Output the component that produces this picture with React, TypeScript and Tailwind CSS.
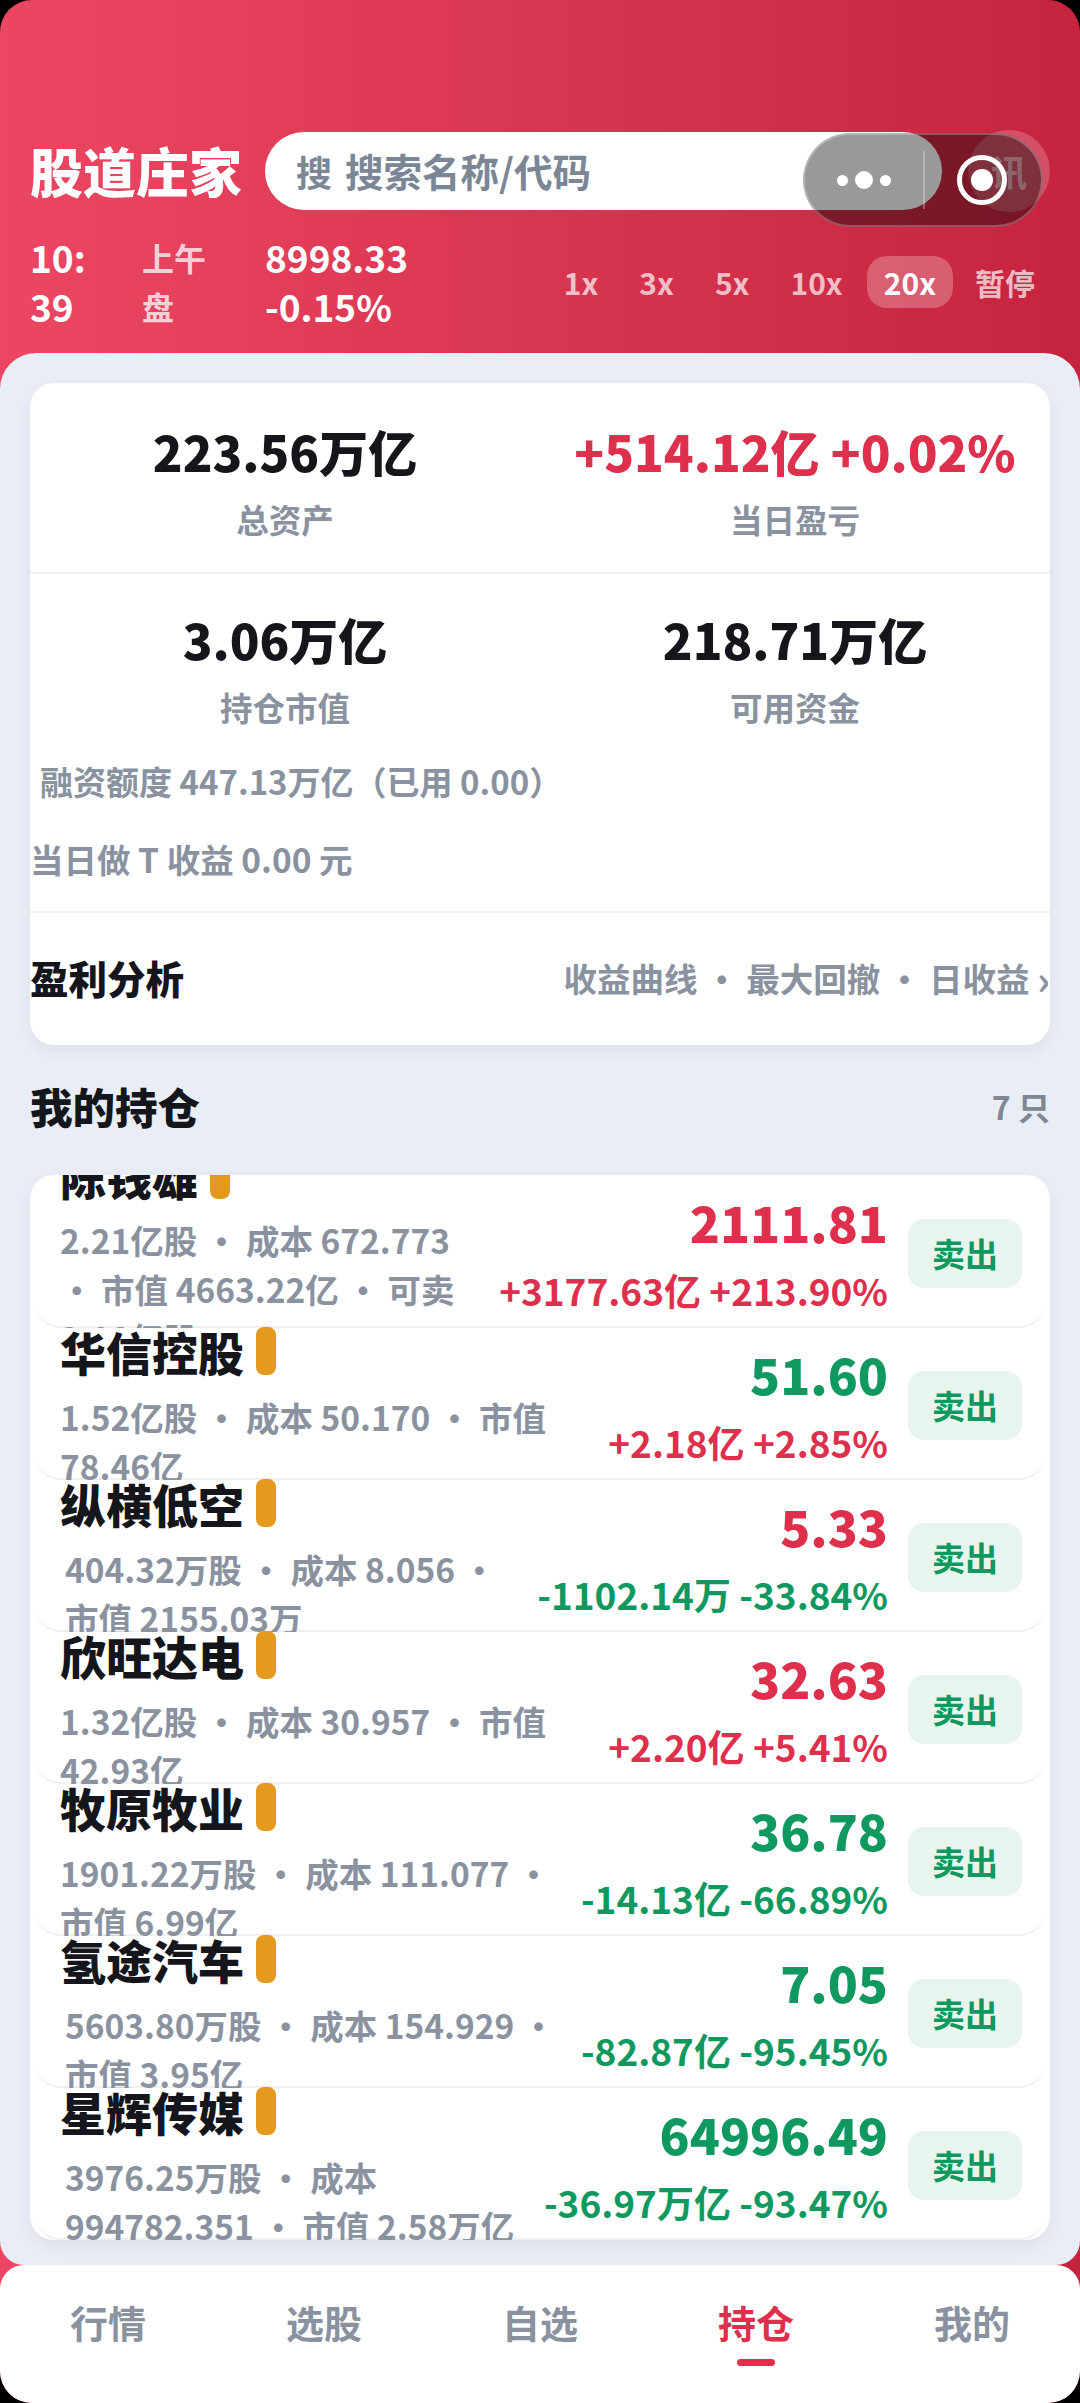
const FONT = "font-['Noto_Sans_CJK_SC','Noto_Sans',sans-serif]";

type Row = {
  name: string;
  lines: string[];
  pad: string;
  price: string;
  pnl: string;
  priceColor: string;
  pnlColor: string;
};

const RED = "text-[#de2f4d]";
const GREEN = "text-[#0f9960]";

const rows: Row[] = [
  { name: "陈钱雄", lines: ["2.21亿股 • 成本 672.773", "• 市值 4663.22亿 • 可卖", "3.08亿股"], pad: "ml-0", price: "2111.81", pnl: "+3177.63亿 +213.90%", priceColor: RED, pnlColor: RED },
  { name: "华信控股", lines: ["1.52亿股 • 成本 50.170 • 市值", "78.46亿"], pad: "ml-0", price: "51.60", pnl: "+2.18亿 +2.85%", priceColor: GREEN, pnlColor: RED },
  { name: "纵横低空", lines: ["404.32万股 • 成本 8.056 •", "市值 2155.03万"], pad: "ml-[5px]", price: "5.33", pnl: "-1102.14万 -33.84%", priceColor: RED, pnlColor: GREEN },
  { name: "欣旺达电", lines: ["1.32亿股 • 成本 30.957 • 市值", "42.93亿"], pad: "ml-0", price: "32.63", pnl: "+2.20亿 +5.41%", priceColor: RED, pnlColor: RED },
  { name: "牧原牧业", lines: ["1901.22万股 • 成本 111.077 •", "市值 6.99亿"], pad: "ml-0", price: "36.78", pnl: "-14.13亿 -66.89%", priceColor: GREEN, pnlColor: GREEN },
  { name: "氢途汽车", lines: ["5603.80万股 • 成本 154.929 •", "市值 3.95亿"], pad: "ml-[5px]", price: "7.05", pnl: "-82.87亿 -95.45%", priceColor: GREEN, pnlColor: GREEN },
  { name: "星辉传媒", lines: ["3976.25万股 • 成本", "994782.351 • 市值 2.58万亿"], pad: "ml-[5px]", price: "64996.49", pnl: "-36.97万亿 -93.47%", priceColor: GREEN, pnlColor: GREEN },
];

function Stat({ value, label, color }: { value: string; label: string; color?: string }) {
  return (
    <div className="flex flex-1 flex-col items-center">
      <div className={`h-[78px] whitespace-nowrap text-[49px] leading-[78px] font-black ${color ?? "text-[#14161c]"}`}>{value}</div>
      <div className="mt-[5px] h-[48px] text-[32.5px] leading-[48px] font-bold text-[#8a92a0]">{label}</div>
    </div>
  );
}

function HoldingRow({ r }: { r: Row }) {
  return (
    <div className="relative z-0 mx-[6px] flex h-[152px] rounded-b-[24px] border-b-2 border-[#eef0f4] bg-white pr-[22px] pl-[24px]">
      <div className="flex min-w-0 flex-1 flex-col justify-center pb-[6px]">
        <div className="flex h-[81px] shrink-0 items-center gap-[12px]">
          <span className="text-[46px] leading-[60px] font-black text-[#14161c]">{r.name}</span>
          <span className="h-[48px] w-[20px] rounded-[8px] bg-[#e39a1e]" />
        </div>
        {r.lines.map((l) => (
          <div key={l} className={`h-[49px] shrink-0 whitespace-pre text-[33.5px] leading-[49px] font-bold text-[#8a92a0] ${r.pad}`}>{l}</div>
        ))}
      </div>
      <div className="flex shrink-0 flex-col items-end pt-[15px]">
        <div className={`h-[62px] text-[49.5px] leading-[62px] font-black ${r.priceColor}`}>{r.price}</div>
        <div className={`mt-[11px] h-[52px] whitespace-nowrap text-[37px] leading-[52px] font-bold ${r.pnlColor}`}>{r.pnl}</div>
      </div>
      <div className="mt-[43px] ml-[20px] flex h-[69px] w-[114px] shrink-0 items-center justify-center rounded-[16px] bg-[#e8f5ee] text-[33px] font-bold text-[#0f9960]">卖出</div>
    </div>
  );
}

export default function App() {
  return (
    <div className="h-[2403px] w-[1080px] bg-black">
      <div className={`${FONT} relative flex h-[2403px] w-[1080px] flex-col overflow-hidden rounded-[32px] bg-gradient-to-r from-[#ec4663] to-[#c6233e]`}>
        <header className="h-[353px] shrink-0 px-[30px] pt-[132px]">
          <div className="flex h-[78px] items-center">
            <div className="w-[210px] shrink-0 text-[53px] font-black whitespace-nowrap text-white">股道庄家</div>
            <div className="ml-[25px] flex h-[78px] flex-1 items-center rounded-full bg-white pl-[31px] text-[36px] font-bold text-[#7c8796]">
              <span>搜</span>
              <span className="ml-[13px] text-[38.5px]">搜索名称/代码</span>
            </div>
            <div className="ml-[26px] flex h-[82px] w-[82px] shrink-0 items-center justify-center rounded-full bg-white/20 text-[36px] font-bold text-white/50">讯</div>
          </div>
          <div className="mt-[22px] flex h-[100px] items-center">
            <div className="w-[112px] text-[37px] leading-[49px] font-bold text-white">10:<br />39</div>
            <div className="w-[123px] text-[32px] leading-[49px] font-bold text-white/75">上午<br />盘</div>
            <div className="text-[37px] leading-[49px] font-bold text-white">8998.33<br />-0.15%</div>
            <div className="ml-auto flex items-center gap-[7px] pl-[2px] text-[30px] font-bold text-white/70">
              {["1x", "3x", "5x", "10x"].map((t) => (
                <span key={t} className="px-[17px]">{t}</span>
              ))}
              <span className="flex h-[52px] items-center rounded-[20px] bg-white/25 px-[17px] text-white">20x</span>
              <span className="px-[15px]">暂停</span>
            </div>
          </div>
        </header>

        <main className="flex h-[1912px] shrink-0 flex-col rounded-t-[36px] rounded-b-[24px] bg-[#e9edf5] px-[30px] pt-[30px]">
          <section className="h-[662px] shrink-0 rounded-[24px] bg-white shadow-[0_6px_16px_rgba(30,40,70,0.06)]">
            <div className="flex h-[191px] items-start border-b-2 border-[#eff1f4] pt-[29px]">
              <Stat value="223.56万亿" label="总资产" />
              <Stat value="+514.12亿 +0.02%" label="当日盈亏" color={RED} />
            </div>
            <div className="flex pt-[26px]">
              <Stat value="3.06万亿" label="持仓市值" />
              <Stat value="218.71万亿" label="可用资金" />
            </div>
            <div className="mt-[26px] pl-[10px] text-[33px] leading-[48px] font-bold whitespace-nowrap text-[#8a92a0]">融资额度 447.13万亿（已用 0.00）</div>
            <div className="mt-[30px] text-[33.5px] leading-[48px] font-bold whitespace-nowrap text-[#8a92a0]">当日做 T 收益 0.00 元</div>
            <div className="mt-[28px] flex h-[132px] items-center justify-between border-t-2 border-[#eff1f4]">
              <span className="text-[38.5px] font-black text-[#14161c]">盈利分析</span>
              <span className="flex items-center text-[33.5px] font-bold whitespace-pre text-[#8a92a0]">收益曲线 • 最大回撤 • 日收益 <span className="text-[40px] leading-none">›</span></span>
            </div>
          </section>

          <div className="mt-[30px] flex h-[62px] shrink-0 items-center justify-between">
            <span className="text-[42.5px] font-black text-[#14161c]">我的持仓</span>
            <span className="text-[32px] font-bold text-[#7f8794]">7 只</span>
          </div>

          <section className="mt-[38px] h-[1065px] shrink-0 overflow-hidden rounded-[24px] bg-white pt-[1px] shadow-[0_6px_16px_rgba(30,40,70,0.06)]">
            {rows.map((r) => (
              <HoldingRow key={r.name} r={r} />
            ))}
          </section>
        </main>

        <nav className="relative z-10 grid h-[138px] shrink-0 grid-cols-5 rounded-t-[24px] bg-white pt-[28px] text-center text-[38px] font-bold text-[#8a92a0]">
          <span>行情</span>
          <span>选股</span>
          <span>自选</span>
          <span className="relative text-[#de2f4d]">
            持仓
            <span className="absolute top-[66px] left-1/2 h-[7px] w-[38px] -translate-x-1/2 rounded-full bg-[#de2f4d]" />
          </span>
          <span>我的</span>
        </nav>

        <div className="absolute top-[133px] left-[803px] flex h-[94px] w-[240px] items-center rounded-full border-2 border-white/25 bg-black/40">
          <div className="flex w-[118px] items-center justify-center gap-[7px]">
            <span className="h-[11px] w-[11px] rounded-full bg-white" />
            <span className="h-[18px] w-[18px] rounded-full bg-white" />
            <span className="h-[11px] w-[11px] rounded-full bg-white" />
          </div>
          <span className="h-[58px] w-[2px] bg-white/30" />
          <div className="ml-[32px] flex h-[50px] w-[50px] items-center justify-center rounded-full border-[5px] border-white">
            <span className="h-[22px] w-[22px] rounded-full bg-white" />
          </div>
        </div>
      </div>
    </div>
  );
}
